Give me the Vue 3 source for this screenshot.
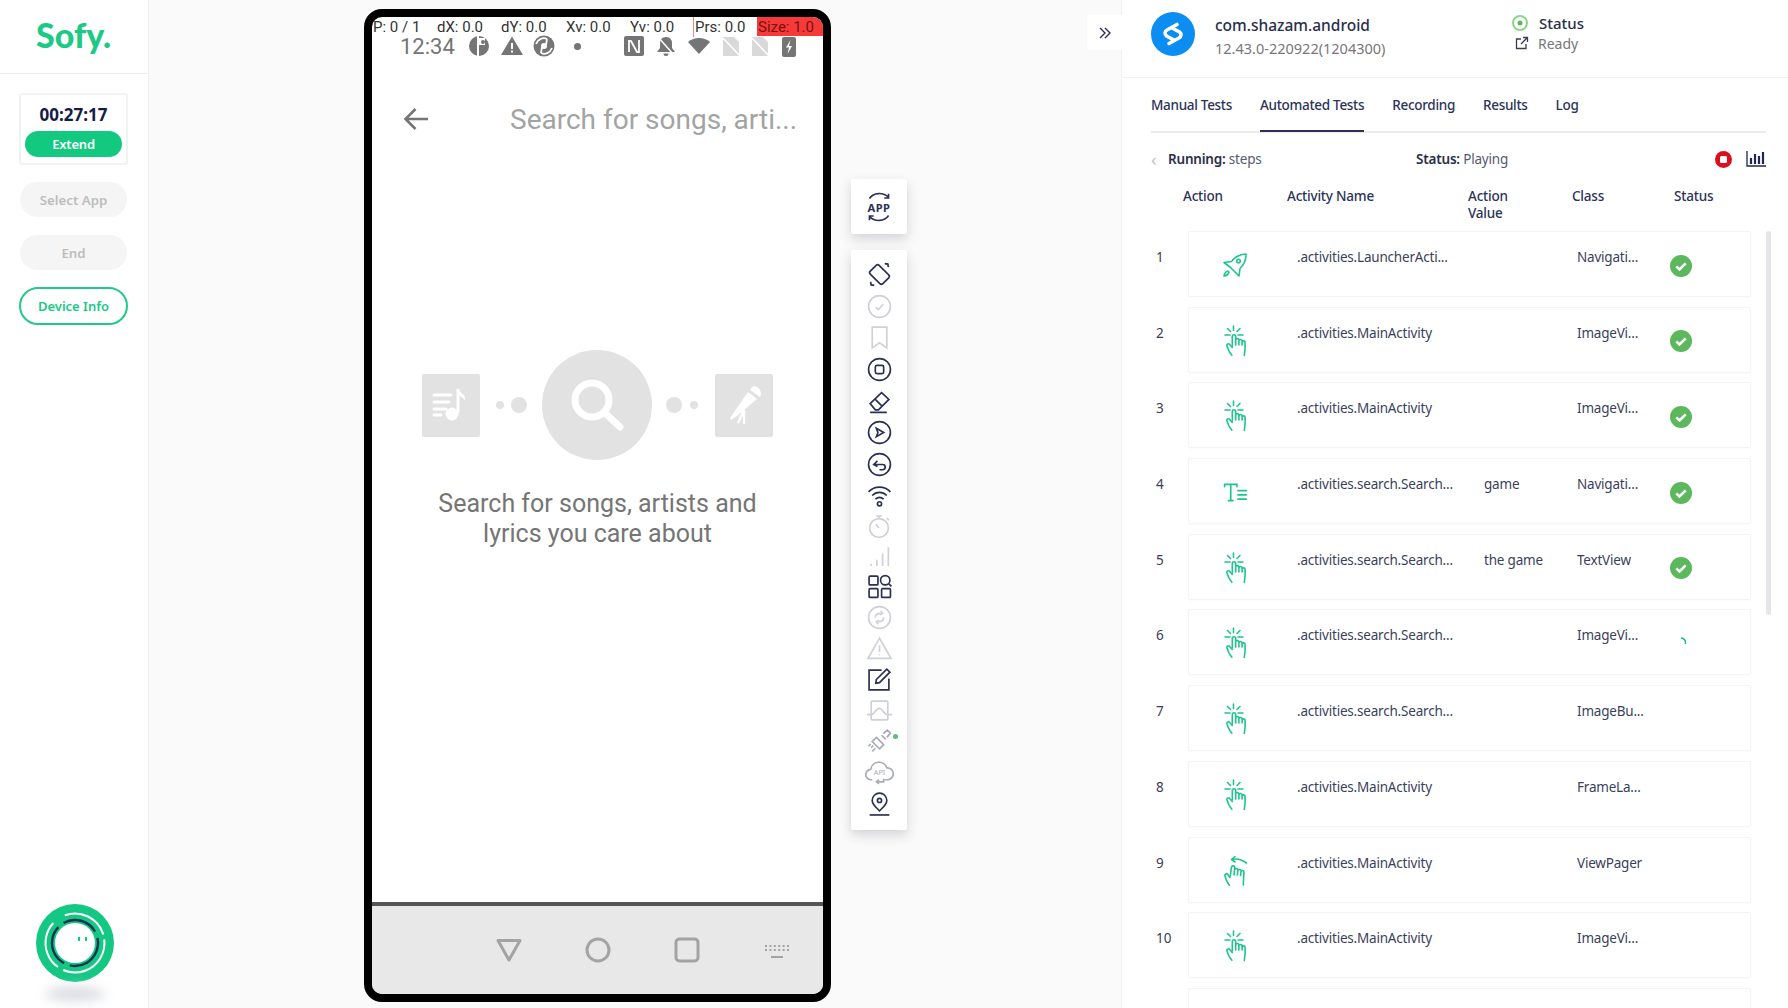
<template>
  <div class="page">
    <svg class="sprite" width="0" height="0">
      <symbol id="tap" viewBox="0 0 24 32">
        <g fill="none" stroke="currentColor" stroke-width="1.6" stroke-linecap="round" stroke-linejoin="round">
          <path d="M10.5 1v4.5M4.5 3.5l3 3M17 3.5l-3 3M2 10h5M15 10h5" />
          <path d="M9.3 21V11.5a1.7 1.7 0 0 1 3.4 0V20M12.7 15a1.6 1.6 0 0 1 3.2.3V20M15.9 16a1.6 1.6 0 0 1 3.2.3V20M19.1 17.2a1.5 1.5 0 0 1 3 .3v6l-.8 7" />
          <path d="M9.3 22.5l-2.6-3a1.6 1.6 0 0 0-2.6 1.9l1.4 3.6c.8 2 2 3.6 3.4 5.2" />
        </g>
      </symbol>
      <symbol id="swipe" viewBox="0 0 26 32">
        <g fill="none" stroke="currentColor" stroke-width="1.6" stroke-linecap="round" stroke-linejoin="round">
          <path d="M9.5 4.5c5-1.200 10-.2 15 3.500M13 1.500L9.500 4.500l3.500 2.500" />
          <path d="M8.300 21l1.200-9a1.700 1.700 0 0 1 3.300.4l-.8 7.600M12.800 14.500a1.600 1.600 0 0 1 3.100.5l-.6 5M16 15.500a1.600 1.600 0 0 1 3.100.5l-.6 4.500M19.100 16.500a1.500 1.500 0 0 1 2.900.5l-.4 6-.3 7" />
          <path d="M8 22.500L5.800 19.500a1.600 1.600 0 0 0-2.700 1.800l1.200 3.700c.7 2 1.800 3.600 3.200 5.200" />
        </g>
      </symbol>
      <symbol id="rocket" viewBox="0 0 26 26">
        <g fill="none" stroke="currentColor" stroke-width="1.6" stroke-linecap="round" stroke-linejoin="round">
          <path d="M24 2c-6 .2-10.500 2.500-14.500 7.500L2 10.500l6.500 5 3.500 3.500 5 5 1-7.500C22 12.500 24.200 8 24 2z" />
          <circle cx="16.500" cy="9" r="1.800" />
          <path d="M6 19c-2 .5-3.500 2-4 5 3-.3 4.500-2 5-4" />
        </g>
      </symbol>
      <symbol id="type" viewBox="0 0 26 20">
        <g fill="none" stroke="currentColor" stroke-width="1.700" stroke-linecap="round">
          <path d="M1.500 4V1.500h13V4M8 1.500V18.500M5.500 18.500h5M15.500 8h9M15.500 12.500h9M15.500 17h9" />
        </g>
      </symbol>
      <symbol id="done" viewBox="0 0 22 22">
        <circle cx="11" cy="11" r="11" fill="#5cb85c" />
        <path d="M6.300 11.300l3.200 3.200 6.200-6.200" fill="none" stroke="#fff" stroke-width="2.600" />
      </symbol>
    </svg>

    <aside class="sidebar">
      <div class="brand">Sofy.</div>
      <div class="side-body">
        <div class="timer-card">
          <div class="time">00:27:17</div>
          <button class="extend">Extend</button>
        </div>
        <button class="muted-btn">Select App</button>
        <button class="muted-btn">End</button>
        <button class="outline-btn">Device Info</button>
      </div>
      <div class="bot">
        <svg width="78" height="78" viewBox="0 0 78 78">
          <circle cx="39" cy="39" r="39" fill="#14c883" />
          <circle cx="39" cy="39" r="29.500" fill="none" stroke="#fff" stroke-width="2" stroke-dasharray="48 5 62 6 50 14" transform="rotate(-110 39 39)" />
          <circle cx="39" cy="39" r="20" fill="#fff" />
          <circle cx="39" cy="39" r="23" fill="none" stroke="#123252" stroke-width="2.400" stroke-dasharray="36 7 46 6 42 8" transform="rotate(-120 39 39)" />
          <path d="M43 33v4M50 33v4" stroke="#14c883" stroke-width="2" />
        </svg>
        <div class="bot-shadow"></div>
      </div>
    </aside>

    <main class="stage">
      <section class="phone">
        <div class="pointer-bar">
          <span>P: 0 / 1</span><span>dX: 0.0</span><span>dY: 0.0</span><span>Xv: 0.0</span><span>Yv: 0.0</span><span class="prs">Prs: 0.0</span><span class="size">Size: 1.0</span>
        </div>
        <div class="status-row">
          <span class="clock">12:34</span>
          <svg class="st-ic" viewBox="0 0 22 22"><circle cx="11" cy="11" r="10" fill="#757575" /><path d="M9 1h2v20H9z" fill="#fff" /><path d="M11 3h6v7h-6z" fill="#fff" /><circle cx="15" cy="7" r="2" fill="#757575" /></svg>
          <svg class="st-ic" viewBox="0 0 22 22"><path d="M11 1.500L22 20H0z" fill="#757575" /><path d="M10 8h2v6h-2zM10 15.500h2v2h-2z" fill="#fff" /></svg>
          <svg class="st-ic" viewBox="0 0 22 22"><circle cx="11" cy="11" r="10.500" fill="#757575" /><circle cx="11" cy="11" r="3" fill="#fff" /><path d="M3 9c2-5 7-7 11-5M19 13c-2 5-7 7-11 5M14 4l-1 6M8 18l1-6" stroke="#fff" stroke-width="1.800" fill="none" /></svg>
          <span class="st-dot"></span>
          <span class="st-gap"></span>
          <svg class="st-ic" viewBox="0 0 22 22"><rect x="1" y="1" width="20" height="20" rx="2" fill="#757575" /><path d="M6 17V6l2 0 6 11 2 0V5" stroke="#fff" stroke-width="1.800" fill="none" /></svg>
          <svg class="st-ic" viewBox="0 0 22 22"><path d="M11 2c4 0 6 3 6 6v5l3 4H2l3-4V8c0-3 2-6 6-6zM8.500 18.500h5a2.500 2.500 0 0 1-5 0z" fill="#757575" /><path d="M3 2l16 18" stroke="#fff" stroke-width="1.500" /></svg>
          <svg class="st-ic" viewBox="0 0 22 22"><path d="M0 7c6-5.500 16-5.500 22 0L11 19z" fill="#757575" /></svg>
          <svg class="st-ic tight" viewBox="0 0 22 22"><path d="M3 2h11l5 5v14H3z" fill="#d9d9d9" /><path d="M3 3l17 18" stroke="#fff" stroke-width="1.500" /></svg>
          <svg class="st-ic tight" viewBox="0 0 22 22"><path d="M3 2h11l5 5v14H3z" fill="#d9d9d9" /><path d="M3 3l17 18" stroke="#fff" stroke-width="1.500" /></svg>
          <svg class="st-ic" viewBox="0 0 22 22"><rect x="4" y="2" width="14" height="20" rx="2" fill="#757575" /><path d="M12.500 5L8 12.500h3L9.500 19l4.500-8h-3z" fill="#fff" /></svg>
        </div>

        <div class="search-row">
          <svg class="back" width="26" height="24" viewBox="0 0 26 24"><path d="M25 12H3M12.500 2L2.500 12l10 10" fill="none" stroke="#757575" stroke-width="2.600" /></svg>
          <span class="search-text">Search for songs, arti...</span>
        </div>

        <div class="empty">
          <div class="art">
            <div class="art-tile">
              <svg width="40" height="40" viewBox="0 0 40 40">
                <path d="M3 10h17M3 17h15M3 24h12M3 30h7" stroke="#fff" stroke-width="3" stroke-linecap="round" />
                <path d="M27 4v24" stroke="#fff" stroke-width="3" />
                <circle cx="21" cy="29" r="6.500" fill="#fff" />
                <path d="M27 3c1 5 8 5 7 13-1-3-4-5-7-5z" fill="#fff" />
              </svg>
            </div>
            <span class="dot small"></span>
            <span class="dot"></span>
            <div class="art-circle">
              <svg width="60" height="60" viewBox="0 0 60 60">
                <circle cx="25" cy="25" r="17" fill="none" stroke="#fff" stroke-width="7" />
                <path d="M38 38l15 14" stroke="#fff" stroke-width="7" stroke-linecap="round" />
              </svg>
            </div>
            <span class="dot"></span>
            <span class="dot small"></span>
            <div class="art-tile">
              <svg width="40" height="44" viewBox="0 0 40 44">
                <path d="M30 3a7.500 7.500 0 0 1 6 11l-10-7a7.500 7.500 0 0 1 4-4z" fill="#fff" />
                <path d="M24 9l9 7-20 17-6 4-1-2z" fill="#fff" />
                <path d="M20 27v14M20 27l-6 13" stroke="#fff" stroke-width="2.400" fill="none" />
              </svg>
            </div>
          </div>
          <p class="empty-text">Search for songs, artists and<br />lyrics you care about</p>
        </div>

        <div class="nav-bar">
          <svg width="26" height="24" viewBox="0 0 26 24"><path d="M2 2.500h22L13 22z" fill="none" stroke="#a3a3a3" stroke-width="3" stroke-linejoin="round" /></svg>
          <svg width="26" height="26" viewBox="0 0 26 26"><circle cx="13" cy="13" r="11" fill="none" stroke="#a3a3a3" stroke-width="3" /></svg>
          <svg width="26" height="26" viewBox="0 0 26 26"><rect x="2" y="2" width="22" height="22" rx="3.500" fill="none" stroke="#a3a3a3" stroke-width="3" /></svg>
          <svg class="keys" width="26" height="16" viewBox="0 0 26 16"><path d="M1 2h24M1 6h24" stroke="#a3a3a3" stroke-width="2.200" stroke-dasharray="2 2.400" /><path d="M7 13h12" stroke="#a3a3a3" stroke-width="2" /></svg>
        </div>
      </section>

      <div class="tools">
        <div class="tool-card app-card">
          <svg width="32" height="34" viewBox="0 0 30 32">
            <path d="M6 8c4-6 13-6 18-1M24 3.500V7.500h-4M24 24c-4 6-13 6-18 1M6 28.500v-4h4" fill="none" stroke="#2b2f55" stroke-width="1.500" />
            <text x="15" y="20.500" text-anchor="middle" class="app-text">APP</text>
          </svg>
        </div>
        <div class="tool-card tool-list">
          <div class="tool"><svg viewBox="0 0 24 24" class="ic"><rect x="6" y="3.500" width="12" height="17" rx="2" transform="rotate(-45 12 12)" /><path d="M17 1.500l3 .5.500 3M3.500 19l.5 3 3 .5" /></svg></div>
          <div class="tool faint"><svg viewBox="0 0 24 24" class="ic"><circle cx="12" cy="12" r="10.500" /><path d="M8.500 12.500l2.500 2.500 4.500-5" /></svg></div>
          <div class="tool faint"><svg viewBox="0 0 24 24" class="ic"><path d="M5 2h14v20l-7-5-7 5z" /></svg></div>
          <div class="tool"><svg viewBox="0 0 24 24" class="ic"><circle cx="12" cy="12" r="10.500" /><rect x="8" y="8" width="8" height="8" rx="1.500" /></svg></div>
          <div class="tool"><svg viewBox="0 0 24 24" class="ic"><path d="M3 14L14 3.500l7 6.500-10 10H8zM7.500 9.500l7 7M3 22.500h16" /></svg></div>
          <div class="tool"><svg viewBox="0 0 24 24" class="ic"><circle cx="12" cy="12" r="10.500" /><path d="M9 8l7 4-7 4 1.500-4z" /></svg></div>
          <div class="tool"><svg viewBox="0 0 24 24" class="ic"><circle cx="12" cy="12" r="10.500" /><path d="M10 8.500L6.500 12 10 14M7 12h8a2.500 2.500 0 0 1 0 5h-3" /></svg></div>
          <div class="tool"><svg viewBox="0 0 24 24" class="ic"><path d="M1.500 8.500c6-6 15-6 21 0M5 12c4-4 10-4 14 0M8 15.500c2.500-2.200 5.500-2.200 8 0" /><circle cx="12" cy="20" r="2" /></svg></div>
          <div class="tool faint short"><svg viewBox="0 0 24 24" class="ic"><circle cx="11.500" cy="13.500" r="9" /><path d="M9 2h5M11.500 2v2.500M19 4l2 2M8.500 10l3 3.500" /></svg></div>
          <div class="tool faint short"><svg viewBox="0 0 24 24" class="ic"><path d="M4 21v-2M9.500 21v-6M15 21V9M20.500 21V3" /></svg></div>
          <div class="tool"><svg viewBox="0 0 24 24" class="ic"><rect x="2" y="2" width="8.500" height="8.500" rx="1" /><rect x="2" y="14" width="8.500" height="8.500" rx="1" /><rect x="14" y="14" width="8.500" height="8.500" rx="1" /><circle cx="17.500" cy="6" r="4.500" /><path d="M21 9.500l2.500 2.500" /></svg></div>
          <div class="tool faint"><svg viewBox="0 0 24 24" class="ic"><circle cx="12" cy="12" r="10.500" /><path d="M8 12c0-2.500 2-4 5-4M13 5.500L15 8l-2.500 1.500M16 12c0 2.500-2 4-5 4M11 18.500L9 16l2.500-1.500" /></svg></div>
          <div class="tool faint"><svg viewBox="0 0 24 24" class="ic"><path d="M12 2L23 21.500H1zM12 9v6.500M12 17.500v1" /></svg></div>
          <div class="tool dark"><svg viewBox="0 0 24 24" class="ic"><path d="M14 3H2v19h19V11" /><path d="M9 12L19 2l3 3-10 10-3.500.5z" /></svg></div>
          <div class="tool faint"><svg viewBox="0 0 24 24" class="ic"><rect x="4" y="3" width="16" height="18" rx="1" /><path d="M0 16h4c3 0 4-6 8-6 3 0 4 6 8 6h4" /></svg></div>
          <div class="tool brush">
            <svg viewBox="0 0 24 24" class="ic"><path d="M9 8l7 7-4 4-7-7zM14 6l4 4M15.500 4.500l4-3.500 3 3-3.500 4M6 16l-2 2M8 18.500l-3 3M3.500 14.500l-2 2" /></svg>
            <span class="live"></span>
          </div>
          <div class="tool faint2"><svg viewBox="0 0 28 24" class="ic wide"><path d="M7 19H6a5 5 0 0 1-.5-10A8 8 0 0 1 21 7.500 5.500 5.500 0 0 1 22 19h-3M11 21h7v-3M13.500 19L11 21l2.500 2" /><text x="14" y="14.500" text-anchor="middle" class="api-text">API</text></svg></div>
          <div class="tool"><svg viewBox="0 0 24 24" class="ic"><path d="M12 2a7 7 0 0 1 7 7c0 4-4 7-7 10-3-3-7-6-7-10a7 7 0 0 1 7-7z" /><circle cx="12" cy="9" r="2" /><path d="M2.500 23h19" /></svg></div>
        </div>
      </div>
    </main>

    <section class="panel">
      <button class="collapse">
        <svg width="14" height="14" viewBox="0 0 14 14"><path d="M2 2l5 5-5 5M7 2l5 5-5 5" fill="none" stroke="#2b2f55" stroke-width="1.400" /></svg>
      </button>

      <header class="app-head">
        <svg class="app-logo" width="44" height="44" viewBox="0 0 44 44">
          <circle cx="22" cy="22" r="22" fill="#0b8df1" />
          <path d="M26 12.500L16 18a3.500 3.500 0 0 0-.5 6l6.500 3.500M18 31.500L28 26a3.500 3.500 0 0 0 .5-6L22 16.500" fill="none" stroke="#fff" stroke-width="3.600" stroke-linecap="round" />
        </svg>
        <div class="app-info">
          <div class="app-name">com.shazam.android</div>
          <div class="app-version">12.43.0-220922(1204300)</div>
        </div>
        <div class="app-status">
          <div class="status-line">
            <svg width="16" height="16" viewBox="0 0 16 16"><circle cx="8" cy="8" r="7" fill="none" stroke="#8ed58a" stroke-width="2" /><circle cx="8" cy="8" r="2.500" fill="#5cb85c" /></svg>
            <strong>Status</strong>
          </div>
          <div class="status-line ready">
            <svg width="14" height="14" viewBox="0 0 14 14"><path d="M6 3H1.500v9.500H11V8M8 1.500h4.500V6M12.500 1.500L6 8" fill="none" stroke="#3a3d55" stroke-width="1.300" /></svg>
            <span>Ready</span>
          </div>
        </div>
      </header>

      <div class="panel-body">
        <nav class="tabs">
          <a v-for="t in tabs" :key="t" class="tab" :class="{ active: t === 'Automated Tests' }">{{ t }}</a>
        </nav>

        <div class="run-bar">
          <div class="run-left"><span class="chev">‹</span><b>Running:</b>&nbsp;steps</div>
          <div class="run-mid"><b>Status:</b>&nbsp;Playing</div>
          <div class="run-actions">
            <svg width="17" height="17" viewBox="0 0 17 17"><circle cx="8.500" cy="8.500" r="8.500" fill="#dd0f1f" /><rect x="5" y="5" width="7" height="7" rx="1.500" fill="#fff" /></svg>
            <svg width="20" height="16" viewBox="0 0 20 16"><path d="M1 0v15h19" fill="none" stroke="#20264f" stroke-width="1.300" /><path d="M5 13V7M9 13V3M13 13V5M17 13V1" stroke="#20264f" stroke-width="2.200" /></svg>
          </div>
        </div>

        <div class="table-head">
          <span>Action</span>
          <span>Activity Name</span>
          <span>Action<br />Value</span>
          <span>Class</span>
          <span>Status</span>
        </div>

        <div class="rows">
          <div v-for="(r, i) in rows" :key="i" class="row-line">
            <span class="num">{{ i + 1 }}</span>
            <div class="row-card">
              <div class="cell-icon">
                <svg class="green" :width="iconSize[r.icon][0]" :height="iconSize[r.icon][1]"><use :href="'#' + r.icon" /></svg>
              </div>
              <div class="cell">{{ r.activity }}</div>
              <div class="cell">{{ r.value }}</div>
              <div class="cell">{{ r.cls }}</div>
              <div class="cell-status">
                <svg v-if="r.state === 'done'" width="22" height="22"><use href="#done" /></svg>
                <svg v-else-if="r.state === 'busy'" width="22" height="22" viewBox="0 0 22 22"><path d="M11 5c3 .2 5 2.500 4.500 6" fill="none" stroke="#14b892" stroke-width="1.500" /></svg>
              </div>
            </div>
          </div>
          <div class="row-line"><div class="row-card"></div></div>
        </div>
        <div class="scroll-thumb"></div>
      </div>
    </section>
  </div>
</template>

<script setup>
const tabs = ["Manual Tests", "Automated Tests", "Recording", "Results", "Log"];

const iconSize = {
  tap: [24, 32],
  swipe: [26, 32],
  rocket: [26, 26],
  type: [25, 19],
};

const rows = [
  { icon: "rocket", activity: ".activities.LauncherActi...", value: "", cls: "Navigati...", state: "done" },
  { icon: "tap", activity: ".activities.MainActivity", value: "", cls: "ImageVi...", state: "done" },
  { icon: "tap", activity: ".activities.MainActivity", value: "", cls: "ImageVi...", state: "done" },
  { icon: "type", activity: ".activities.search.Search...", value: "game", cls: "Navigati...", state: "done" },
  { icon: "tap", activity: ".activities.search.Search...", value: "the game", cls: "TextView", state: "done" },
  { icon: "tap", activity: ".activities.search.Search...", value: "", cls: "ImageVi...", state: "busy" },
  { icon: "tap", activity: ".activities.search.Search...", value: "", cls: "ImageBu...", state: "" },
  { icon: "tap", activity: ".activities.MainActivity", value: "", cls: "FrameLa...", state: "" },
  { icon: "swipe", activity: ".activities.MainActivity", value: "", cls: "ViewPager", state: "" },
  { icon: "tap", activity: ".activities.MainActivity", value: "", cls: "ImageVi...", state: "" },
];
</script>

<style>
html,
body {
  margin: 0;
  overflow: hidden;
  background: #fafafa;
}
</style>

<style scoped>
* {
  box-sizing: border-box;
}

.page {
  display: flex;
  width: 1788px;
  height: 1008px;
  overflow: hidden;
  background: #fafafa;
  font-family: "Noto Sans", "Liberation Sans", sans-serif;
  color: #2c3357;
}

.sprite {
  position: absolute;
}

.sidebar {
  width: 149px;
  flex: none;
  display: flex;
  flex-direction: column;
  background: #fff;
  border-right: 1px solid #f0f0f0;
}

.brand {
  height: 74px;
  padding: 13px 0 0 36px;
  border-bottom: 1px solid #eee;
  font-family: Lato, sans-serif;
  font-weight: 900;
  font-size: 34px;
  line-height: 44px;
  color: #1cc985;
}

.side-body {
  padding: 19px 20px 0 19px;
  display: flex;
  flex-direction: column;
}

.timer-card {
  height: 72px;
  padding: 9px 4px 0;
  border: 2px solid #f2f2f2;
  border-radius: 3px;
  text-align: center;
}

.time {
  font-weight: 700;
  font-size: 17px;
  line-height: 22px;
  color: #171c47;
}

.extend {
  display: block;
  width: 97px;
  height: 26px;
  margin-top: 5px;
  border: none;
  border-radius: 13px;
  background: #12c97f;
  color: #fff;
  font: 600 13px "Noto Sans", sans-serif;
  letter-spacing: -0.2px;
}

.muted-btn {
  height: 35px;
  margin: 17px 1px 0;
  border: none;
  border-radius: 18px;
  background: #f5f5f5;
  color: #bdbdbd;
  font: 600 13.300px "Noto Sans", sans-serif;
}

.muted-btn + .muted-btn {
  margin-top: 18px;
}

.outline-btn {
  height: 38px;
  margin-top: 17px;
  border: 2px solid #22c98a;
  border-radius: 19px;
  background: #fff;
  color: #1cc985;
  font: 600 13px "Noto Sans", sans-serif;
}

.bot {
  margin: auto 0 0 36px;
  height: 104px;
  position: relative;
}

.bot svg {
  display: block;
}

.bot-shadow {
  width: 60px;
  height: 14px;
  margin: 5px 0 0 9px;
  border-radius: 50%;
  background: #d8dbe0;
  filter: blur(6px);
}

.stage {
  width: 972px;
  flex: none;
  display: flex;
  align-items: flex-start;
  padding: 9px 0 0 215px;
  gap: 20px;
}

.phone {
  width: 467px;
  height: 993px;
  flex: none;
  display: flex;
  flex-direction: column;
  border: 8px solid #000;
  border-radius: 18px;
  background: #fff;
  overflow: hidden;
  font-family: Roboto, sans-serif;
}

.pointer-bar {
  display: grid;
  grid-template-columns: 64px 64px 65px 64px 64px 64px 66px;
  height: 18px;
  font-size: 15px;
  line-height: 20px;
  color: #333;
  white-space: nowrap;
}

.pointer-bar span {
  padding-left: 1px;
}

.pointer-bar .prs {
  border-left: 1px solid #e88;
}

.pointer-bar .size {
  height: 19px;
  background: #f63a3a;
  color: #7a1010;
}

.status-row {
  display: flex;
  align-items: center;
  height: 22px;
  padding-left: 28px;
  color: #757575;
}

.clock {
  width: 68px;
  font-size: 22px;
}

.st-ic {
  width: 22px;
  height: 22px;
  margin-right: 10.500px;
  flex: none;
}

.st-ic.tight {
  margin-right: 7px;
}

.st-dot {
  width: 7px;
  height: 7px;
  margin-left: 8px;
  border-radius: 50%;
  background: #757575;
}

.st-gap {
  width: 42px;
}

.search-row {
  display: flex;
  align-items: center;
  height: 36px;
  margin-top: 44px;
  padding-left: 31px;
}

.back {
  flex: none;
}

.search-text {
  margin-left: 81px;
  font-size: 28px;
  color: #a3a3a3;
  white-space: nowrap;
}

.empty {
  flex: 1;
  padding-top: 213px;
  text-align: center;
}

.art {
  display: flex;
  align-items: center;
  justify-content: center;
}

.art-tile {
  width: 58px;
  height: 63px;
  display: flex;
  align-items: center;
  justify-content: center;
  background: #e2e2e2;
  border-radius: 2px;
}

.art-circle {
  width: 110px;
  height: 110px;
  margin: 0 14px 0 15px;
  display: flex;
  align-items: center;
  justify-content: center;
  background: #e2e2e2;
  border-radius: 50%;
}

.dot {
  width: 16px;
  height: 16px;
  border-radius: 50%;
  background: #e2e2e2;
}

.dot.small {
  width: 8px;
  height: 8px;
  margin: 0 7px 0 16px;
}

.dot + .art-tile {
  margin-left: 17px;
}

.art-circle + .dot + .dot.small {
  margin: 0 0 0 8px;
}

.empty-text {
  margin: 29px 0 0;
  font-size: 25px;
  line-height: 30px;
  color: #757575;
}

.nav-bar {
  height: 92px;
  flex: none;
  display: grid;
  grid-template-columns: 89px 89px 89px 91px;
  justify-content: start;
  justify-items: center;
  align-items: center;
  padding-left: 92px;
  border-top: 4px solid #555;
  background: #e8e8e8;
}

.keys {
  margin-top: 3px;
}

.tools {
  width: 56px;
  flex: none;
  margin-top: 170px;
}

.tool-card {
  background: #fff;
  border-radius: 2px;
  box-shadow: 0 5px 12px rgba(40, 40, 60, 0.18);
}

.app-card {
  height: 55px;
  margin-bottom: 16px;
  display: flex;
  align-items: center;
  justify-content: center;
}

.app-text {
  font: 700 10.500px "Noto Sans", sans-serif;
  fill: #2b2f55;
  letter-spacing: 0.4px;
}

.tool-list {
  height: 580px;
  padding-top: 9px;
}

.tool {
  position: relative;
  height: 31px;
  display: flex;
  align-items: center;
  justify-content: center;
}

.tool:nth-child(-n + 8) {
  height: 31.600px;
}

.tool.short {
  height: 29.500px;
}

.ic {
  width: 25px;
  height: 25px;
  fill: none;
  stroke: #2b2f55;
  stroke-width: 1.600;
}

.ic.wide {
  width: 29px;
}

.tool.faint .ic {
  stroke: #cfd0d8;
}

.tool.faint2 .ic,
.tool.brush .ic {
  stroke: #a9abb8;
}

.api-text {
  font: 400 7px "Noto Sans", sans-serif;
  fill: #a9abb8;
  stroke: none;
}

.live {
  position: absolute;
  top: 8px;
  right: 9px;
  width: 5px;
  height: 5px;
  border-radius: 50%;
  background: #5cc07a;
}

.panel {
  flex: 1;
  position: relative;
  background: #fff;
  border-left: 1px solid #f2f2f2;
}

.collapse {
  position: absolute;
  top: 15px;
  left: -35px;
  width: 35px;
  height: 35px;
  display: flex;
  align-items: center;
  justify-content: center;
  padding: 0;
  border: none;
  border-radius: 3px 0 0 3px;
  background: #fff;
}

.app-head {
  height: 78px;
  display: flex;
  padding: 12px 0 0 29px;
  border-bottom: 1px solid #f2f2f2;
}

.app-logo {
  flex: none;
}

.app-info {
  width: 317px;
  padding: 2px 0 0 20px;
}

.app-name {
  font-weight: 500;
  font-size: 15.500px;
  line-height: 22px;
  color: #2a2e4a;
}

.app-version {
  margin-top: 3px;
  font-size: 14.500px;
  line-height: 19px;
  color: #777;
}

.status-line {
  display: flex;
  align-items: center;
  gap: 11px;
  height: 22px;
  font-size: 15px;
  color: #2a2e4a;
}

.status-line strong {
  font-weight: 500;
}

.status-line.ready {
  height: 18px;
  gap: 9px;
  padding-left: 3px;
  font-size: 14px;
  color: #777;
}

.panel-body {
  position: relative;
  padding: 0 0 0 29px;
}

.tabs {
  display: flex;
  gap: 28px;
  width: 615px;
  height: 55px;
  padding-top: 17px;
  border-bottom: 2px solid #ececec;
}

.tab {
  height: 37px;
  font-weight: 500;
  font-size: 13.500px;
  letter-spacing: -0.3px;
  line-height: 21px;
  color: #2c3357;
}

.tab.active {
  border-bottom: 2px solid #2c3357;
}

.run-bar {
  position: relative;
  display: flex;
  align-items: center;
  width: 615px;
  height: 20px;
  margin-top: 16px;
  font-size: 13.500px;
  letter-spacing: -0.2px;
  color: #555a70;
}

.run-bar b {
  font-weight: 600;
  color: #2a2e4a;
}

.run-left {
  width: 265px;
  display: flex;
  align-items: center;
  white-space: nowrap;
}

.chev {
  width: 17px;
  font-size: 18px;
  line-height: 18px;
  color: #c4c4c4;
}

.run-mid {
  display: flex;
  white-space: nowrap;
}

.run-actions {
  margin-left: auto;
  display: flex;
  align-items: center;
  gap: 14px;
}

.table-head {
  display: grid;
  grid-template-columns: 104px 181px 104px 102px 80px;
  width: 615px;
  margin-top: 19px;
  padding-left: 32px;
  font-weight: 500;
  font-size: 13.500px;
  letter-spacing: -0.2px;
  line-height: 17px;
  color: #2c3357;
}

.rows {
  margin-top: 9px;
  width: 600px;
}

.row-line {
  display: flex;
  height: 66px;
  margin-bottom: 9.700px;
}

.num {
  width: 37px;
  flex: none;
  padding: 16px 0 0 5px;
  font-size: 13.500px;
  line-height: 20px;
  color: #3a3d55;
}

.row-line:last-child {
  padding-left: 37px;
}

.row-card {
  flex: 1;
  display: grid;
  grid-template-columns: 108px 187px 93px 88px 1fr;
  border: 1px solid #f4f4f4;
  border-radius: 2px;
  box-shadow: 0 1px 2px rgba(0, 0, 0, 0.02);
}

.cell-icon {
  display: flex;
  align-items: center;
  justify-content: center;
  padding-right: 16px;
  color: #1cc58c;
}

.green {
  color: #1cc58c;
  display: block;
  margin-top: 2px;
}

.cell {
  padding-top: 15px;
  font-size: 13.500px;
  letter-spacing: -0.2px;
  line-height: 20px;
  color: #3a3f5c;
  white-space: nowrap;
}

.cell-status {
  display: flex;
  align-items: center;
  padding: 3px 0 0 5px;
}

.scroll-thumb {
  position: absolute;
  top: 153px;
  right: 17px;
  width: 5px;
  height: 384px;
  border-radius: 3px;
  background: #e6e6ea;
}
</style>
